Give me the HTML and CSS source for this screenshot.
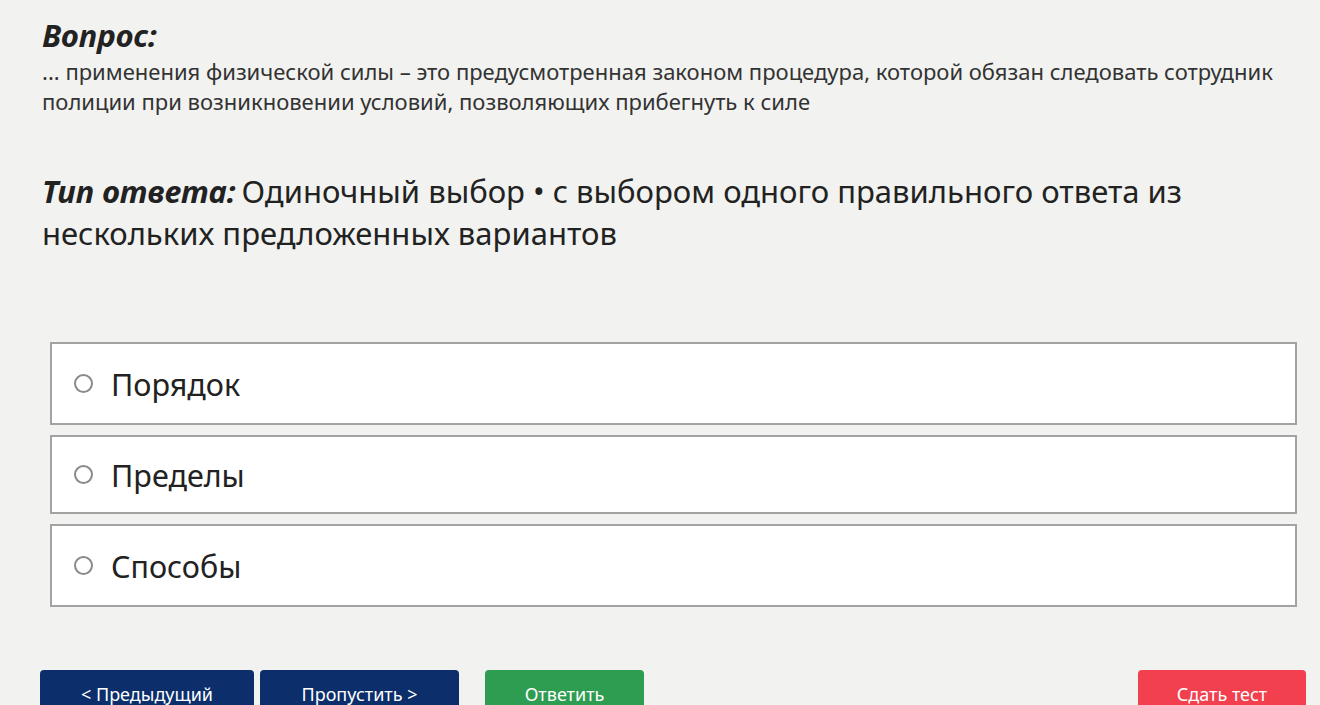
FILE: index.html
```html
<!DOCTYPE html>
<html lang="ru">
<head>
  <meta charset="UTF-8" />
  <meta name="viewport" content="width=device-width, initial-scale=1.0"/>
  <title>Тест</title>
  <link rel="stylesheet" href="styles.css">
</head>
<body>
  <div class="question">
    <h2 class="label">Вопрос:</h2>
    <p class="text">... применения физической силы – это предусмотренная законом процедура, которой обязан следовать сотрудник полиции при возникновении условий, позволяющих прибегнуть к силе</p>
  </div>

  <div class="type">
    <span class="label">Тип ответа:</span>Одиночный выбор • с выбором одного правильного ответа из нескольких предложенных вариантов
  </div>

  <div class="options">
    <label class="option"><input type="radio" name="ans" /> <span>Порядок</span></label>
    <label class="option mid"><input type="radio" name="ans" /> <span>Пределы</span></label>
    <label class="option"><input type="radio" name="ans" /> <span>Способы</span></label>
  </div>

  <div class="buttons">
    <button class="btn blue prev">&lt; Предыдущий</button>
    <button class="btn blue skip">Пропустить &gt;</button>
    <button class="btn green answer">Ответить</button>
    <button class="btn red finish">Сдать тест</button>
  </div>
</body>
</html>
```

FILE: styles.css
```css
body {
  font-family: "Noto Sans", "Open Sans", sans-serif;
  margin: 0;
  padding: 14px 30px 0 42px;
  background-color: #f2f2f0;
  color: #222;
}

.label {
  font-weight: bold;
  font-style: italic;
}

.question h2 {
  font-size: 31px;
  margin: 0;
  line-height: 42px;
}

.question .text {
  font-size: 22px;
  line-height: 30px;
  margin: 0;
  color: #333;
}

.type {
  margin-top: 54px;
  font-size: 31px;
  line-height: 42px;
  color: #222;
}

.type .label {
  margin-right: 6px;
}

.options {
  margin: 88px -7px 0 8px;
}

.option {
  display: flex;
  align-items: center;
  height: 79px;
  background: #fff;
  border: 2px solid #a3a3a3;
  margin-bottom: 10px;
  padding-left: 22px;
  font-size: 30.5px;
  color: #222;
}

.option.mid {
  height: 75px;
}

.option input {
  appearance: none;
  width: 19px;
  height: 19px;
  border: 2px solid #8a8a8a;
  border-radius: 50%;
  margin: 0 18px 0 0;
  box-sizing: border-box;
}

.buttons {
  display: flex;
  margin: 63px -16px 0 -2px;
}

.btn {
  font-family: "Noto Sans", "Open Sans", sans-serif;
  font-size: 18px;
  color: #fff;
  border: none;
  border-radius: 4px;
  height: 48px;
  padding: 0;
  align-self: flex-start;
}

.blue { background: #0c2f6b; }
.green { background: #2e9d52; }
.red { background: #f2404f; }

.prev { width: 214px; }
.skip { width: 199px; margin-left: 6px; }
.answer { width: 159px; margin-left: 26px; }
.finish { width: 168px; margin-left: auto; }
```
